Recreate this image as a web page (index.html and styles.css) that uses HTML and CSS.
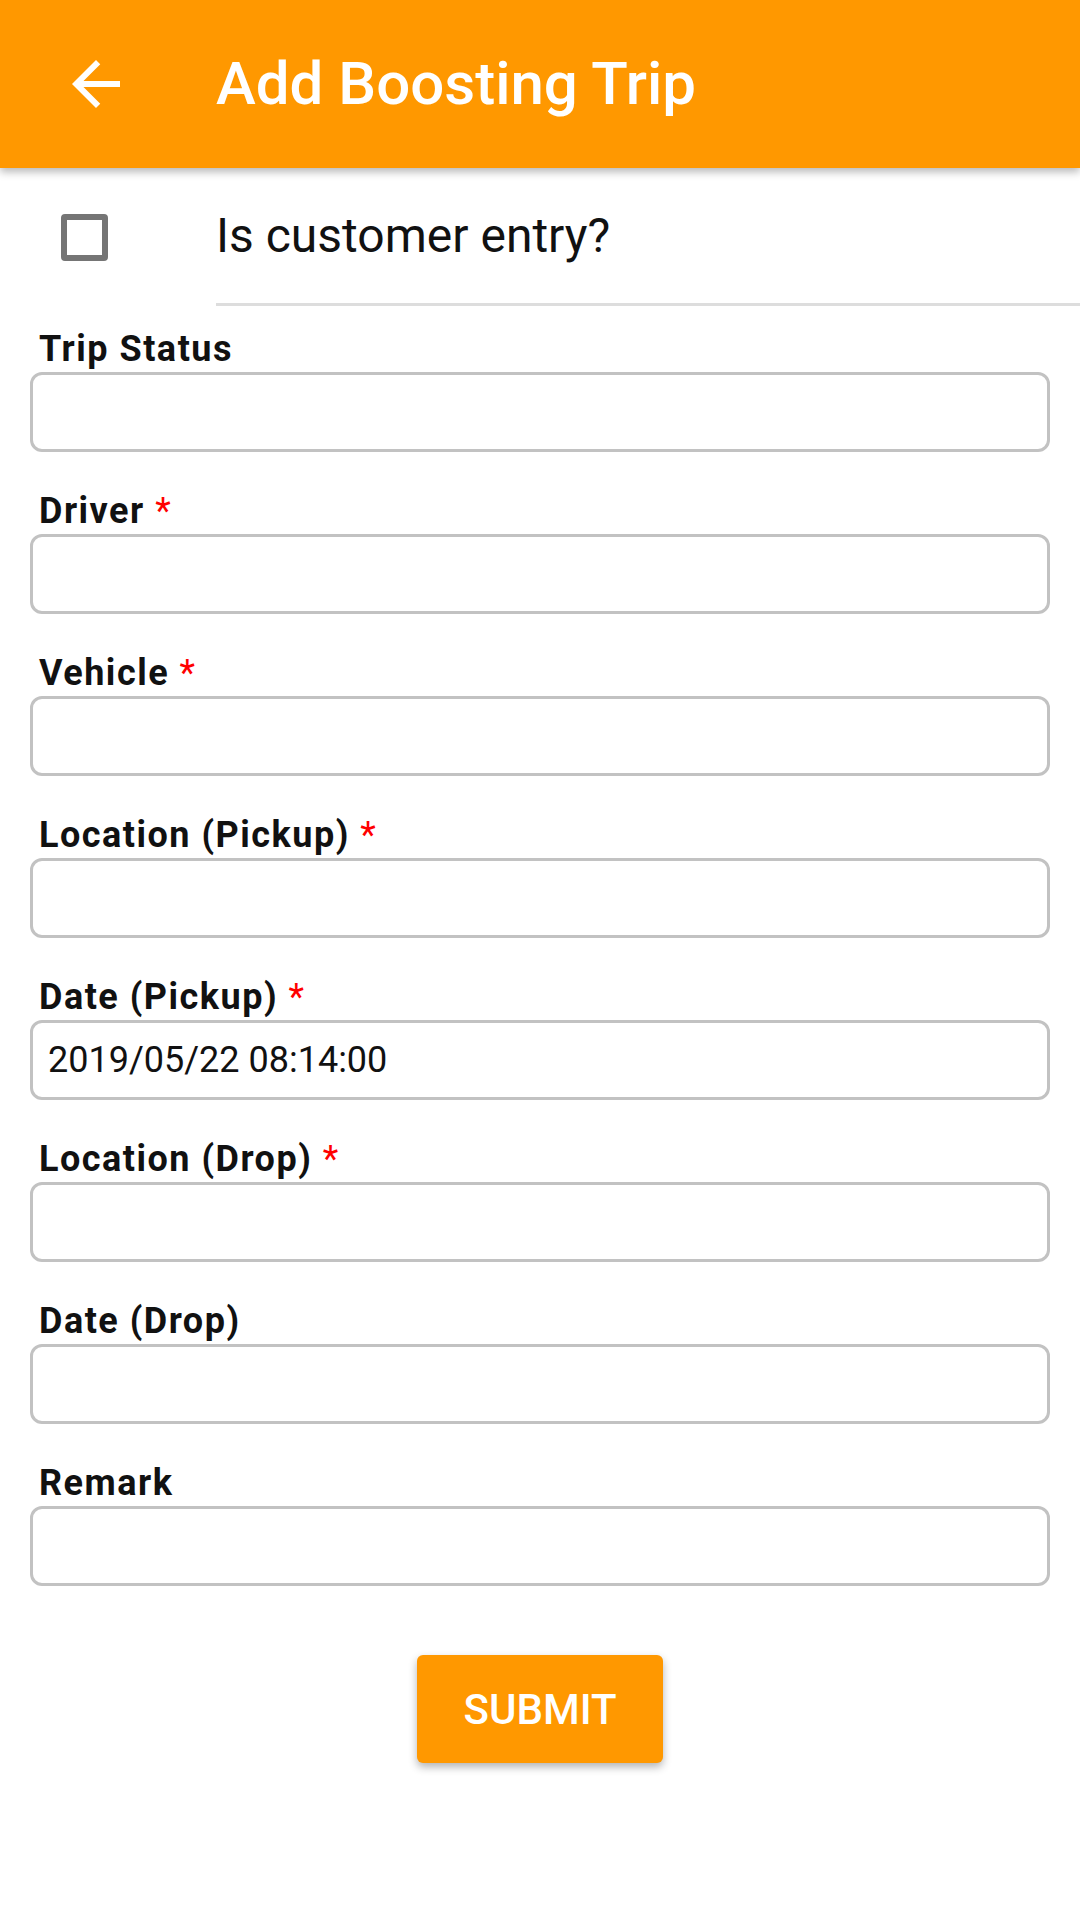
FILE: index.html
```html
<!DOCTYPE html>
<html>
<head>
<meta charset="utf-8">
<link rel="stylesheet" href="styles.css">
</head>
<body>
<header class="appbar">
  <svg class="back" viewBox="0 0 24 24" width="72" height="72"><path fill="#fff" d="M20 11H7.83l5.59-5.59L12 4l-8 8 8 8 1.41-1.41L7.83 13H20v-2z"/></svg>
  <h1 class="title">Add Boosting Trip</h1>
</header>
<div class="check-row">
  <div class="check-wrap"><span class="checkbox"></span></div>
  <div class="check-label">Is customer entry?</div>
</div>
<form class="form">
  <div class="field"><label class="label">Trip Status</label><input class="input" type="text"></div>
  <div class="field"><label class="label">Driver <span class="req">*</span></label><input class="input" type="text"></div>
  <div class="field"><label class="label">Vehicle <span class="req">*</span></label><input class="input" type="text"></div>
  <div class="field"><label class="label">Location (Pickup) <span class="req">*</span></label><input class="input" type="text"></div>
  <div class="field"><label class="label">Date (Pickup) <span class="req">*</span></label><input class="input" type="text" value="2019/05/22 08:14:00"></div>
  <div class="field"><label class="label">Location (Drop) <span class="req">*</span></label><input class="input" type="text"></div>
  <div class="field"><label class="label">Date (Drop)</label><input class="input" type="text"></div>
  <div class="field"><label class="label">Remark</label><input class="input" type="text"></div>
  <div class="actions"><button class="submit" type="button">SUBMIT</button></div>
</form>
</body>
</html>
```
FILE: styles.css
```css
html, body {
  margin: 0;
  padding: 0;
  background: #fff;
  font-family: Roboto, "Noto Sans", sans-serif;
  width: 1080px;
  height: 1920px;
  overflow: hidden;
}
.appbar {
  position: relative;
  z-index: 2;
  height: 168px;
  background: #ff9800;
  display: flex;
  align-items: center;
  padding-left: 60px;
  box-shadow: 0 4px 8px rgba(0, 0, 0, 0.28);
}
.back {
  display: block;
  flex: none;
}
.title {
  margin: 0 0 0 84px;
  color: #fff;
  font-size: 60px;
  font-weight: 500;
  line-height: 70px;
}
.check-row {
  display: flex;
  height: 138px;
}
.check-wrap {
  width: 217px;
  box-sizing: border-box;
  padding-left: 61px;
  display: flex;
  align-items: center;
  flex: none;
}
.checkbox {
  display: block;
  width: 47px;
  height: 47px;
  box-sizing: border-box;
  border: 6px solid #757575;
  border-radius: 4px;
}
.check-label {
  flex: 1;
  display: flex;
  align-items: center;
  border-bottom: 3px solid #dddddd;
  font-size: 48px;
  color: #111;
  margin-left: -1px;
}
.form {
  padding: 22px 30px 0;
  margin: 0;
}
.field {
  display: flex;
  flex-direction: column;
  margin-bottom: 38px;
}
.label {
  display: block;
  margin-left: 9px;
  margin-bottom: 2px;
  font-size: 36px;
  line-height: 42px;
  font-weight: 700;
  letter-spacing: 1.5px;
  color: #111;
}
.req {
  color: #ff0000;
  font-weight: 400;
}
.input {
  display: block;
  box-sizing: border-box;
  width: 100%;
  height: 80px;
  margin: 0;
  border: 3px solid #c2c2c2;
  border-radius: 12px;
  padding: 0 15px;
  font-family: Roboto, "Noto Sans", sans-serif;
  font-size: 36px;
  color: #111;
  background: #fff;
  outline: none;
}
.actions {
  display: flex;
  justify-content: center;
  padding-top: 31px;
}
.submit {
  width: 246px;
  height: 108px;
  border: none;
  border-radius: 6px;
  background: #ff9800;
  color: #fff;
  font-family: Roboto, "Noto Sans", sans-serif;
  font-size: 42px;
  font-weight: 500;
  letter-spacing: 0;
  box-shadow: 0 4px 8px rgba(0, 0, 0, 0.3);
  padding: 0;
}
```
